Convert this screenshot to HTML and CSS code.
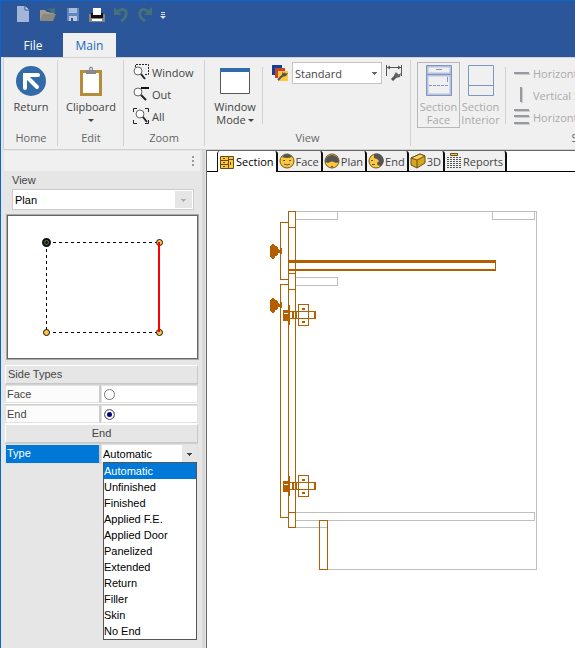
FILE: index.html
```html
<!DOCTYPE html>
<html lang="en">
<head>
<meta charset="utf-8">
<title>Cabinet Section Editor</title>
<link rel="stylesheet" href="styles.css">
</head>
<body>
<div class="window">
  <header class="titlebar">
    <div class="quick">
      <button aria-label="New"><svg width="16" height="18" viewBox="0 0 16 18"><path d="M2 1h8l4 4v12H2z" fill="#a3b5d9"/><path d="M10 1v4h4" fill="#d3deef" stroke="#2b579a"/></svg></button>
      <button aria-label="Open"><svg width="18" height="18" viewBox="0 0 18 18"><path d="M1 5h5l2 2h7v3H5l-4 6z" fill="#a09b8c"/><path d="M1 16l3-7h13l-3 7z" fill="#8b887f"/><path d="M8 5q3-3 6-1l2-2v6h-6l2-2q-2-2-4-1z" fill="#477378"/></svg></button>
      <button aria-label="Save"><svg width="16" height="18" viewBox="0 0 16 18"><path d="M2 3h12v13H2z" fill="#5f86bd"/><path d="M4 3h8v5H4z" fill="#a8bddc"/><path d="M4 11h8v5H4z" fill="#bdc9dd"/><path d="M6 13h2v3H6z" fill="#2b579a"/></svg></button>
      <button aria-label="Print"><svg width="16" height="18" viewBox="0 0 16 18"><path d="M0 9h16v8H0z" fill="#858585"/><path d="M2 8h12v5H2z" fill="#111"/><path d="M4 3h8v7H4z" fill="#fff"/><path d="M3 14h10v2H3z" fill="#fff"/></svg></button>
      <button aria-label="Undo"><svg width="16" height="18" viewBox="0 0 16 18"><path d="M4 7c6-5 10-2 9 3q-1 4-5 6" fill="none" stroke="#46717b" stroke-width="3"/><path d="M1 2v8h8z" fill="#46717b"/></svg></button>
      <button aria-label="Redo"><svg width="16" height="18" viewBox="0 0 16 18"><path d="M12 7c-6-5-10-2-9 3q1 4 5 6" fill="none" stroke="#46717b" stroke-width="3"/><path d="M15 2v8H7z" fill="#46717b"/></svg></button>
      <button class="more" aria-label="Customize toolbar"><svg width="6" height="18" viewBox="0 0 6 18"><path d="M1 7.500h4M1 9.500h4" stroke="#d9d9d9"/><path d="M0 11h6l-3 3z" fill="#ddd"/></svg></button>
    </div>
    <nav class="menu"><a href="#file">File</a><a href="#main" class="current">Main</a></nav>
  </header>

  <section class="ribbon" aria-label="Main">
    <div class="group home">
      <div class="tools"><button class="big"><svg width="30" height="30" viewBox="0 0 30 30"><circle cx="15" cy="15" r="15" fill="#336ba9"/><path d="M9 9h13M9 9v13M9 9l12 12" fill="none" stroke="#fff" stroke-width="4" stroke-linecap="round"/><path d="M7 7h15v4H7z" fill="#fff"/></svg><span>Return</span></button></div>
      <h2>Home</h2>
    </div>
    <div class="group edit">
      <div class="tools"><button class="big"><svg width="22" height="30" viewBox="0 0 22 30"><path d="M0 4h22v26H0z" fill="#b78b3c"/><path d="M3 7h16v20H3z" fill="#fff"/><path d="M6 8V4h3V2q2-3 4 0v2h3v4z" fill="#88898c"/><circle cx="11" cy="3" r="1" fill="#f0f0f0"/></svg><span>Clipboard</span><i class="arrow"></i></button></div>
      <h2>Edit</h2>
    </div>
    <div class="group zoom">
      <div class="tools list">
        <button class="row"><svg width="16" height="16" viewBox="0 0 16 16"><path d="M2.500 3V.5h13v10H12" fill="none" stroke="#222" stroke-dasharray="2 1"/><circle cx="5" cy="7" r="4" fill="#fff" stroke="#666"/><path d="M8 10l4 5" stroke="#222" stroke-width="2"/></svg>Window</button>
        <button class="row"><svg width="16" height="16" viewBox="0 0 16 16"><path d="M8 1h8v2H8z" fill="#111"/><circle cx="5" cy="6" r="4" fill="#fff" stroke="#666"/><path d="M8 9l5 5" stroke="#222" stroke-width="2"/></svg>Out</button>
        <button class="row"><svg width="16" height="16" viewBox="0 0 16 16"><path d="M.5 4V.5H4M12 .5h3.500V4M15.500 12v3.500H12M4 15.500H.5V12" fill="none" stroke="#222"/><circle cx="7" cy="6" r="4" fill="#fff" stroke="#666"/><path d="M10 9l4 5" stroke="#222" stroke-width="2"/></svg>All</button>
      </div>
      <h2>Zoom</h2>
    </div>
    <div class="group view">
      <div class="tools">
        <button class="big mode"><svg width="30" height="30" viewBox="0 0 30 30"><path d="M.5 2.500h29v25H.5z" fill="#fff" stroke="#555"/><path d="M0 2h30v4H0z" fill="#336ba9"/></svg><span>Window<br>Mode<i class="arrow inline"></i></span></button>
        <div class="divider"></div>
        <div class="style-row">
          <svg width="16" height="16" viewBox="0 0 16 16"><path d="M0 0h10v10H0z" fill="#143f94"/><path d="M3 3h10v10H3z" fill="#cc4427"/><path d="M6 6h10v10H6z" fill="#ffc83a"/><path d="M6 15l7-7" stroke="#555" stroke-width="2"/><path d="M10 6l1 3 5-1-2 3-4 1z" fill="#555"/></svg>
          <select class="combo" aria-label="View style"><option>Standard</option></select>
          <button aria-label="Dimension settings"><svg width="16" height="16" viewBox="0 0 16 16"><path d="M.5 0v11M15.500 0v11M1 2.500h14" stroke="#555"/><path d="M1 2.500l3-2v4zM15 2.500l-3-2v4z" fill="#555"/><path d="M6 15l6-6" stroke="#555" stroke-width="3"/><path d="M10 7l2 3 3-2-1 4-4 1-2-3z" fill="#666"/></svg></button>
        </div>
      </div>
      <h2>View</h2>
    </div>
    <div class="group section">
      <div class="tools">
        <button class="big face" disabled><svg width="26" height="31" viewBox="0 0 26 31"><path d="M1.500 1.500h23v28h-23zM1 8.500h24M1 10.500h24" fill="none" stroke="#b5c2dd" stroke-width="2"/><path d="M.5.5h25v30H.5zM0 9.500h26M10 4.500h6M21.500 12v5" fill="none" stroke="#7f96c2"/><path d="M3 20.500h20" stroke="#7f96c2" stroke-dasharray="3 1"/></svg><span>Section<br>Face</span></button>
        <button class="big interior" disabled><svg width="26" height="31" viewBox="0 0 26 31"><path d="M.5.5h25v30H.5zM0 20.500h25" fill="none" stroke="#7f96c2"/></svg><span>Section<br>Interior</span></button>
        <div class="divider"></div>
        <div class="list">
          <button class="row" disabled><svg width="16" height="16" viewBox="0 0 16 16"><path d="M1 8h15v2H1z" fill="#ccc"/><path d="M0 7h15v2H0z" fill="#969aa0"/></svg>Horizontal</button>
          <button class="row" disabled><svg width="16" height="16" viewBox="0 0 16 16"><path d="M7 1h2v15H7z" fill="#ccc"/><path d="M6 0h2v15H6z" fill="#969aa0"/></svg>Vertical S</button>
          <button class="row" disabled><svg width="16" height="16" viewBox="0 0 16 16"><path d="M1 1h15v2H1zM1 7h15v2H1zM1 14h15v2H1z" fill="#ccc"/><path d="M0 0h15v2H0zM0 6h15v2H0zM0 13h15v2H0z" fill="#969aa0"/></svg>Horizontal</button>
        </div>
      </div>
      <h2>S</h2>
    </div>
  </section>

  <main class="workspace">
    <aside class="panel">
      <div class="grip"><svg width="2" height="10" viewBox="0 0 2 10"><path d="M0 0h2v2H0zM0 4h2v2H0zM0 8h2v2H0z" fill="#999"/></svg></div>
      <label class="view-label" for="view">View</label>
      <select class="view-select" id="view"><option>Plan</option></select>
      <div class="plan">
        <svg width="190" height="142" viewBox="8 216 190 142">
          <path d="M46.500 242.500H159M46.500 242.500V332M46.500 332.500H159" fill="none" stroke="#000" stroke-dasharray="3 3" shape-rendering="crispEdges"/>
          <g fill="#ffc53d" stroke="#111"><circle cx="159.500" cy="242.500" r="3"/><circle cx="159.500" cy="332.500" r="3"/><circle cx="46.500" cy="332.500" r="3"/></g>
          <path d="M158 242h2v90h-2z" fill="#f00"/>
          <circle cx="46.500" cy="242.500" r="3" fill="#111" stroke="#111" stroke-width="3"/><circle cx="46.500" cy="242.500" r="2" fill="#111" stroke="#5b8746"/>
        </svg>
      </div>
      <div class="props">
        <div class="head">Side Types</div>
        <div class="prop"><label for="side-face">Face</label><div class="value"><input type="radio" name="side" id="side-face"></div></div>
        <div class="prop"><label for="side-end">End</label><div class="value"><input type="radio" name="side" id="side-end" checked></div></div>
        <div class="head center">End</div>
        <div class="prop type"><label for="type">Type</label><div class="value">
          <select id="type"><option>Automatic</option></select>
          <ul class="options" role="listbox" aria-label="Type">
            <li role="option" aria-selected="true">Automatic</li><li role="option">Unfinished</li><li role="option">Finished</li><li role="option">Applied F.E.</li><li role="option">Applied Door</li><li role="option">Panelized</li><li role="option">Extended</li><li role="option">Return</li><li role="option">Filler</li><li role="option">Skin</li><li role="option">No End</li>
          </ul></div></div>
      </div>
    </aside>
    <section class="document">
      <div class="tabs" role="tablist">
        <button role="tab" aria-selected="true"><svg width="16" height="16" viewBox="0 0 16 16"><path d="M1.500 2.500h13v12h-13z" fill="#ffc83a" stroke="#654b13"/><path d="M1 6.500h8M1 10.500h8M9.500 2.500v12M4 4.500h2M4 8.500h2M4 12.500h2M9 5.500h5M11.500 8v3" fill="none" stroke="#654b13"/></svg>Section</button>
        <button role="tab"><svg width="16" height="16" viewBox="0 0 16 16"><circle cx="8" cy="8" r="7" fill="#ffc83a" stroke="#6d561e"/><path d="M3 4q5-6 10 0-5 2-10 0z" fill="#555"/><path d="M4 7.500h2M10 7.500h2M5 11q3 2 6 0" fill="none" stroke="#555"/></svg>Face</button>
        <button role="tab"><svg width="16" height="16" viewBox="0 0 16 16"><circle cx="8" cy="8" r="7" fill="#ffc83a" stroke="#6d561e"/><path d="M1 9a7 7 0 1 1 14 0l-3 1q-4-3-8 0z" fill="#555"/><path d="M7 13.500h2" stroke="#555"/></svg>Plan</button>
        <button role="tab"><svg width="16" height="16" viewBox="0 0 16 16"><circle cx="8" cy="8" r="7" fill="#ffc83a" stroke="#6d561e"/><path d="M6 1a7 7 0 0 1 7 12q-4 0-4-3l2-2-2-2-3-1z" fill="#555"/><path d="M3 7.500h2M4 11.500h3" stroke="#555"/></svg>End</button>
        <button role="tab"><svg width="16" height="16" viewBox="0 0 16 16"><path d="M1 5l9-4 5 2v7l-8 5-6-3z" fill="#d9a51c" stroke="#65521c"/><path d="M1 5l9-4 5 2-8 4z" fill="#ffd05a" stroke="#65521c"/><path d="M7 7v8" stroke="#65521c"/></svg>3D</button>
        <button role="tab"><svg width="16" height="16" viewBox="0 0 16 16"><path d="M4.500.5h7v2h-7z" fill="#ffc83a" stroke="#65521c"/><path d="M1 4.500h14M1 6.500h14M1 8.500h14M1 10.500h14M1 12.500h14M1 14.500h14" stroke="#555" stroke-dasharray="2 1"/></svg>Reports</button>
      </div>
      <svg class="drawing" width="368" height="476" viewBox="207 172 368 476" shape-rendering="crispEdges" role="img" aria-label="Cabinet section">
        <defs>
          <g id="hinge"><path d="M283 310h5v11h-5z" fill="#b35f00"/><path d="M284 313.500h4" stroke="#fff"/><path d="M289.500 305v20M289 311.500h26v7h-26M298.500 304.500h10v21h-10zM302.500 309.500v-1h2v1zM302.500 322.500v-1h2v1z" fill="none" stroke="#b35f00"/><path d="M288 305h2v20h-2zM292 311h2v8h-2zM295 311h2v8h-2zM314 311h2v8h-2z" fill="#b35f00"/></g>
          <path id="knob" d="M270 246h1v-1h1v-1h2v1h1v1h2v1h1v2h1v1h1v-2h2v6h-2v-1h-2v2h-1v1h-2v2h-1v1h-2v-1h-1v-1h-1z" fill="#b35f00"/>
        </defs>
        <path d="M296 211.500h240.500v358H327M337.500 211v8H296M492.500 211v8.500h42V211M296 277.500h41.500v8H296M296 512.500h238.500v8H296M296 527.500h31" fill="none" stroke="#bebebe"/>
        <path d="M288.500 211.500h7v316h-7zM280.500 222.500h8v57h-8zM280.500 284.500h8v233h-8zM288 227.500h8M288 273.500h8M288 289.500h8M288 512.500h8M319.500 520.500h8v49h-8zM495.500 260v10" fill="none" stroke="#b35f00"/>
        <path d="M288 260h208v3H288zM288 269h208v2H288z" fill="#b35f00"/>
        <use href="#knob"/><use href="#knob" y="54"/>
        <use href="#hinge"/><use href="#hinge" y="171"/>
      </svg>
    </section>
  </main>
</div>
</body>
</html>
```

FILE: styles.css
```css
* { box-sizing: border-box; }
body { margin: 0; overflow: hidden; color: #444; font: 11px/13px "Open Sans", "Noto Sans", sans-serif; }
button, select, input { margin: 0; padding: 0; border: 0; background: none; color: inherit; font: inherit; border-radius: 0; }
svg { display: block; flex: none; }
.window { display: flex; flex-direction: column; min-height: 100vh; border-left: 1px solid #0a64cc; background: #e6e6e6; }

.titlebar { border-top: 1px solid #0a64cc; background: #2b579a; }
.quick { display: flex; height: 32px; padding: 4px 0 0 14px; gap: 8px; }
.quick button { display: flex; height: 18px; }
.quick .more { margin-left: -1px; }
.menu { display: flex; height: 24px; padding-left: 2px; font-size: 12px; }
.menu a { display: flex; align-items: center; justify-content: center; width: 60px; color: #fff; text-decoration: none; }
.menu .current { width: 53px; background: #f0f0f0; color: #2068bd; }

.ribbon { display: flex; height: 93px; margin-left: 2px; padding-top: 2px; border: 1px solid #d2d2d2; border-right: 0; background: #f0f0f0; overflow: hidden; }
.group { display: flex; flex-direction: column; flex: none; height: 86px; border-right: 1px solid #d2d2d2; white-space: nowrap; }
.home { width: 54px; padding-left: 1px; }
.edit { width: 66px; padding-left: 1px; }
.zoom { width: 81px; }
.view { width: 206px; }
.section { width: 328px; }
.group h2 { margin: 0; color: #666; font: inherit; line-height: 16px; text-align: center; }
.tools { display: flex; height: 70px; padding-top: 2px; justify-content: center; }
.big { display: flex; flex-direction: column; align-items: center; height: 66px; padding-top: 4px; gap: 4px; }
.big .arrow { margin-top: 2px; }
.arrow { width: 0; border: 3px solid transparent; border-top-color: #444; border-bottom: 0; }
.big .inline { display: inline-block; margin: 0 0 2px 2px; vertical-align: middle; }
button:disabled { color: #aaa; }
.list { display: flex; flex-direction: column; justify-content: flex-start; }
.row { display: flex; align-items: center; gap: 3px; height: 22px; }
.zoom .list { padding: 1px 0 0 9px; }
.view .tools { justify-content: flex-start; padding-left: 8px; }
.mode { width: 44px; }
.divider { flex: none; width: 1px; height: 57px; margin: 5px 9px 0 5px; background: #d2d2d2; }
.style-row { display: flex; align-items: center; height: 22px; gap: 4px; }
.combo { appearance: none; width: 90px; height: 22px; padding-left: 2px; border: 1px solid #c4c4c4; background: linear-gradient(#666, #666) 79px 9px / 5px 1px no-repeat, linear-gradient(#666, #666) 80px 10px / 3px 1px no-repeat, linear-gradient(#666, #666) 81px 11px / 1px 1px no-repeat, #fff; }
.section .tools { justify-content: flex-start; padding-left: 6px; }
.face { width: 43px; padding-top: 2px; border: 1px solid #b8b8b8; }
.interior { width: 41px; padding-top: 3px; }
.section .divider { margin-left: 4px; margin-right: 8px; }

.workspace { display: flex; flex: 1; margin-left: 3px; }
.panel { display: flex; flex-direction: column; flex: none; width: 203px; padding: 1px 8px 0 0; border-right: 1px solid #666; color: #444; font: 11px/16px "Liberation Sans", Arial, sans-serif; background: linear-gradient(#d8d8d8, #d8d8d8) right 1px top / 3px 100% no-repeat; }
.grip { display: flex; justify-content: flex-end; align-items: center; height: 20px; margin-right: -2px; padding-right: 6px; background: #f0f0f0; }
.view-label { margin: 1px 0 1px 8px; }
.view-select { appearance: none; height: 21px; margin: 0 4px 0 8px; padding-left: 2px; border: 1px solid #ccc; color: #000; background: linear-gradient(#b0b0b0, #b0b0b0) right 7px top 9px / 5px 1px no-repeat, linear-gradient(#b0b0b0, #b0b0b0) right 8px top 10px / 3px 1px no-repeat, linear-gradient(#b0b0b0, #b0b0b0) right 9px top 11px / 1px 1px no-repeat, linear-gradient(#e6e6e6, #e6e6e6) right 1px top 1px / 17px 17px no-repeat, #fff; }
.plan { margin: 5px 0 6px 3px; border: 1px solid #666; outline: 1px solid #aaa; background: #fff; overflow: hidden; }
.props { margin: 0 0 0 1px; }
.head { height: 19px; padding-left: 2px; border: 1px solid #fff; border-right-color: #c8c8c8; border-bottom-color: #c8c8c8; }
.head.center { padding: 0; text-align: center; }
.prop { display: grid; grid-template-columns: 96px 1fr; height: 20px; border-top: 1px solid #d0d0d0; border-bottom: 1px solid #fff; }
.prop label { padding-left: 1px; border: 1px solid #e1e1e1; border-right: 2px solid #ccc; background: #fcfcfc; }
.prop .value { position: relative; display: flex; align-items: center; padding-left: 2px; border: 1px solid #e1e1e1; background: #fff; }
.prop input { appearance: none; width: 11px; height: 11px; border: 1px solid #777; border-radius: 50%; background: #fff; }
.prop input:checked { background: #000080; box-shadow: inset 0 0 0 2px #fff; }
.prop.type label { background: #0078d7; color: #fff; }
.prop select { appearance: none; width: 100%; height: 18px; color: #000; background: linear-gradient(#444, #444) right 5px top 8px / 5px 1px no-repeat, linear-gradient(#444, #444) right 6px top 9px / 3px 1px no-repeat, linear-gradient(#444, #444) right 7px top 10px / 1px 1px no-repeat, linear-gradient(#e6e6e6, #e6e6e6) right / 15px 100% no-repeat; }
.prop.type .value { padding-left: 1px; }
.options { position: absolute; top: 17px; left: 1px; right: 0; margin: 0; padding: 0; border: 1px solid #555; background: #fff; color: #000; list-style: none; }
.options li { height: 16px; line-height: 16px; }
.options [aria-selected="true"] { background: #0078d7; color: #fff; }

.document { flex: 1; min-width: 0; overflow: hidden; background: #fff; }
.tabs { display: flex; height: 22px; padding-left: 10px; border-top: 1px solid #666; border-bottom: 1px solid #000; }
.tabs button { display: flex; align-items: center; gap: 1px; flex: none; height: 20px; padding: 0 2px 0 1px; border-right: 2px solid #111; border-top-right-radius: 3px; border-top-left-radius: 3px; background: #f0f0f0; }
.tabs [aria-selected="true"] { height: 21px; border-left: 1px solid #111; background: #fff; color: #000; }
.drawing { margin: 0; }
```
